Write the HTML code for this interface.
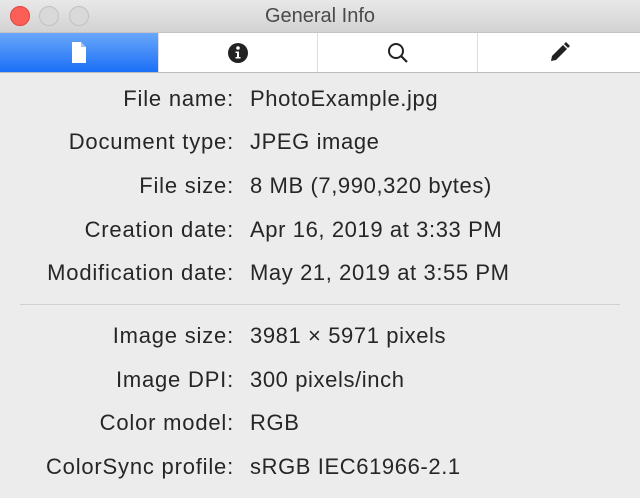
<!DOCTYPE html>
<html><head><style>
body{margin:0;width:640px;height:498px;background:#ececec;font-family:"Liberation Sans",sans-serif;overflow:hidden;position:relative}
.title{position:absolute;top:0;left:0;width:640px;height:32px;background:linear-gradient(#e8e8e8,#d3d3d3);border-bottom:1px solid #c4c4c4;text-align:center;line-height:32px;font-size:20px;color:#4a4a4a}
.dot{position:absolute;top:6px;width:20px;height:20px;border-radius:50%;box-sizing:border-box}
.tabs{position:absolute;top:33px;left:0;width:640px;height:39px;background:#fff;border-bottom:1px solid #bdbdbd}
.tab{position:absolute;top:0;height:39px;display:flex;align-items:center;justify-content:center}
.row{position:absolute;left:0;width:640px;font-size:22px;letter-spacing:.6px;color:#262626;height:26px;line-height:26px}
.l{position:absolute;right:406px;text-align:right;white-space:nowrap;letter-spacing:.8px}
.v{position:absolute;left:250px;white-space:nowrap}
.sep{position:absolute;left:20px;width:600px;top:304px;height:1px;background:#d0d0d0}
</style></head><body>
<div class="title">General Info
<div class="dot" style="left:10px;background:#fc5f57;border:1px solid #e0443e"></div>
<div class="dot" style="left:39px;border:1px solid #c1c1c1;background:#d9d9d9"></div>
<div class="dot" style="left:69px;border:1px solid #c1c1c1;background:#d9d9d9"></div>
</div>
<div class="tabs">
<div class="tab" style="left:0;width:158px;background:linear-gradient(#6aa7fa,#1a6ff6)">
<svg width="16" height="22" viewBox="0 0 16 22"><path d="M1 0H10L15 5V21H1Z" fill="#fff"/><path d="M10 0V5H15" fill="#1a6ff6" opacity=".4"/></svg></div>
<div class="tab" style="left:158px;width:159px;border-left:1px solid #ddd;box-sizing:border-box">
<svg width="20" height="20" viewBox="0 0 20 20"><circle cx="10" cy="10" r="10" fill="#222"/><circle cx="10" cy="5" r="1.8" fill="#fff"/><path d="M7.5 8.5H11V14H12.5V15.5H7.5V14H9V10H7.5Z" fill="#fff"/></svg></div>
<div class="tab" style="left:317px;width:160px;border-left:1px solid #ddd;box-sizing:border-box">
<svg width="22" height="22" viewBox="0 0 22 22"><circle cx="9" cy="9" r="7" fill="none" stroke="#222" stroke-width="2"/><path d="M14 14L20 20" stroke="#222" stroke-width="2.2"/></svg></div>
<div class="tab" style="left:477px;width:163px;border-left:1px solid #ddd;box-sizing:border-box">
<svg width="22" height="22" viewBox="0 0 22 22"><path d="M3 19L4 14L15 3L19 7L8 18Z" fill="#222"/><path d="M16 2L18 0L22 4L20 6Z" fill="#222"/></svg></div>
</div>
<div class="row" style="top:86px"><span class="l">File name:</span><span class="v">PhotoExample.jpg</span></div>
<div class="row" style="top:129px"><span class="l">Document type:</span><span class="v">JPEG image</span></div>
<div class="row" style="top:173px"><span class="l">File size:</span><span class="v">8 MB (7,990,320 bytes)</span></div>
<div class="row" style="top:217px"><span class="l">Creation date:</span><span class="v">Apr 16, 2019 at 3:33 PM</span></div>
<div class="row" style="top:260px"><span class="l">Modification date:</span><span class="v">May 21, 2019 at 3:55 PM</span></div>
<div class="sep"></div>
<div class="row" style="top:323px"><span class="l">Image size:</span><span class="v">3981 × 5971 pixels</span></div>
<div class="row" style="top:367px"><span class="l">Image DPI:</span><span class="v">300 pixels/inch</span></div>
<div class="row" style="top:410px"><span class="l">Color model:</span><span class="v">RGB</span></div>
<div class="row" style="top:454px"><span class="l">ColorSync profile:</span><span class="v">sRGB IEC61966-2.1</span></div>
</body></html>
